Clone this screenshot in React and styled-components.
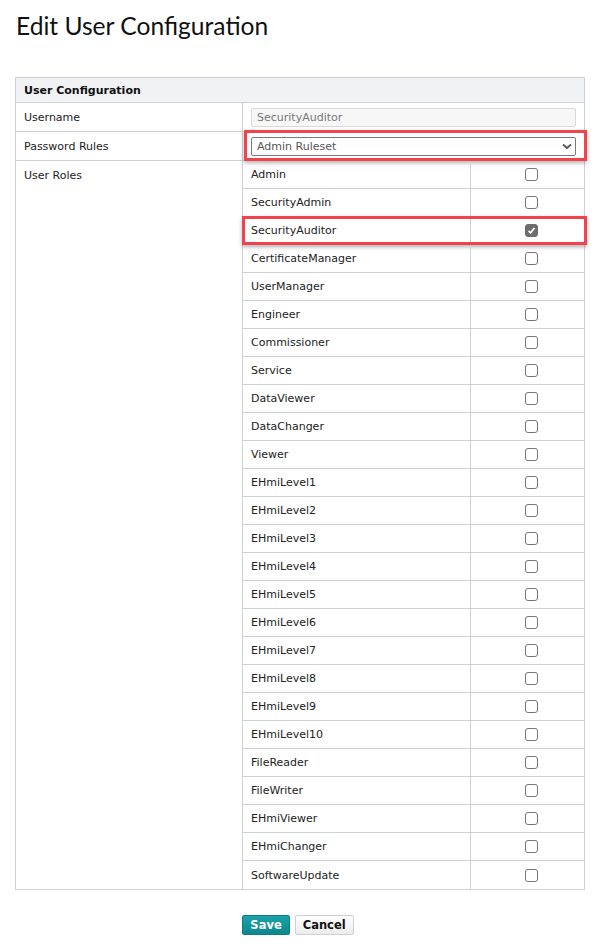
import React from 'react';
import styled, { createGlobalStyle } from 'styled-components';

const roles = [
  'Admin',
  'SecurityAdmin',
  'SecurityAuditor',
  'CertificateManager',
  'UserManager',
  'Engineer',
  'Commissioner',
  'Service',
  'DataViewer',
  'DataChanger',
  'Viewer',
  'EHmiLevel1',
  'EHmiLevel2',
  'EHmiLevel3',
  'EHmiLevel4',
  'EHmiLevel5',
  'EHmiLevel6',
  'EHmiLevel7',
  'EHmiLevel8',
  'EHmiLevel9',
  'EHmiLevel10',
  'FileReader',
  'FileWriter',
  'EHmiViewer',
  'EHmiChanger',
  'SoftwareUpdate',
];

const Checkbox = ({ checked }) => (
  <Box checked={checked}>
    {checked && (
      <svg width="9" height="9" viewBox="0 0 9 9">
        <path d="M1.5 4.8 L3.6 6.8 L7.5 2" fill="none" stroke="#fff" strokeWidth="1.8" />
      </svg>
    )}
  </Box>
);

const App = () => {
  return (
    <Page>
      <GlobalStyle />
      <Title>Edit User Configuration</Title>
      <Table>
        <Header>User Configuration</Header>
        <Label>Username</Label>
        <Cell>
          <TextInput>SecurityAuditor</TextInput>
        </Cell>
        <Label>Password Rules</Label>
        <Cell highlight>
          <Select>
            <span>Admin Ruleset</span>
            <svg width="10" height="7" viewBox="0 0 10 7">
              <path d="M1 1.5 L5 5 L9 1.5" fill="none" stroke="#555" strokeWidth="1.8" />
            </svg>
          </Select>
        </Cell>
        <Label last>User Roles</Label>
        <RoleList>
          {roles.map((role, i) => (
            <RoleRow key={role} highlight={role === 'SecurityAuditor'} last={i === roles.length - 1}>
              <RoleName>{role}</RoleName>
              <RoleCheck>
                <Checkbox checked={role === 'SecurityAuditor'} />
              </RoleCheck>
            </RoleRow>
          ))}
        </RoleList>
      </Table>
      <Actions>
        <SaveButton>Save</SaveButton>
        <CancelButton>Cancel</CancelButton>
      </Actions>
    </Page>
  );
};

export default App;

// Styled components
const GlobalStyle = createGlobalStyle`
  body {
    margin: 0;
    background: #fff;
    font-family: "DejaVu Sans", Verdana, sans-serif;
    color: #222;
  }
`;

const Page = styled.div`
  padding: 11px 15px 16px 15px;
  width: 570px;
`;

const Title = styled.h1`
  margin: 0 0 36px 1px;
  font-family: "Lato", "Open Sans", sans-serif;
  font-weight: 400;
  font-size: 24.6px;
  line-height: 30px;
  color: #111;
`;

const Table = styled.div`
  display: grid;
  grid-template-columns: 227px 1fr;
  border: 1px solid #cdd1d6;
  font-size: 11px;
`;

const Header = styled.div`
  grid-column: 1 / span 2;
  height: 24px;
  display: flex;
  align-items: center;
  padding-left: 8px;
  background: #f0f2f4;
  border-bottom: 1px solid #cdd1d6;
  font-weight: bold;
  color: #111;
`;

const Label = styled.div`
  padding: 8px 8px 0 8px;
  height: ${({ last }) => (last ? 'auto' : '20px')};
  border-right: 1px solid #cdd1d6;
  border-bottom: ${({ last }) => (last ? 'none' : '1px solid #cdd1d6')};
  color: #222;
`;

const Cell = styled.div`
  position: relative;
  height: 28px;
  padding: 0 8px;
  display: flex;
  align-items: center;
  border-bottom: 1px solid #cdd1d6;

  ${({ highlight }) =>
    highlight &&
    `
    &::after {
      content: '';
      position: absolute;
      left: 1px;
      right: -3px;
      top: -2px;
      bottom: -1px;
      border: 3px solid #f0434b;
      box-shadow: 0 2px 4px rgba(0, 0, 0, 0.3);
      pointer-events: none;
    }
  `}
`;

const TextInput = styled.div`
  flex: 1;
  height: 17px;
  display: flex;
  align-items: center;
  padding: 0 5px;
  background: #f7f7f7;
  border: 1px solid #d9d9d9;
  border-radius: 2px;
  color: #777;
`;

const Select = styled.div`
  flex: 1;
  height: 17px;
  display: flex;
  align-items: center;
  justify-content: space-between;
  padding: 0 3px 0 5px;
  background: #fff;
  border: 1px solid #7a7a7a;
  border-radius: 2px;
  color: #555;
`;

const RoleList = styled.div`
  display: flex;
  flex-direction: column;
`;

const RoleRow = styled.div`
  position: relative;
  display: grid;
  grid-template-columns: 228px 1fr;
  height: 28px;
  border-bottom: ${({ last }) => (last ? 'none' : '1px solid #cdd1d6')};
  box-sizing: border-box;

  ${({ highlight }) =>
    highlight &&
    `
    &::after {
      content: '';
      position: absolute;
      left: -1px;
      right: -3px;
      top: -1px;
      bottom: -1px;
      border: 3px solid #f0434b;
      box-shadow: 0 2px 4px rgba(0, 0, 0, 0.3);
      pointer-events: none;
    }
  `}
`;

const RoleName = styled.div`
  display: flex;
  align-items: center;
  padding-left: 8px;
  border-right: 1px solid #cdd1d6;
  color: #222;
`;

const RoleCheck = styled.div`
  display: flex;
  align-items: center;
  justify-content: center;
  padding-left: 7px;
`;

const Box = styled.span`
  width: 13px;
  height: 13px;
  box-sizing: border-box;
  border-radius: 3px;
  display: flex;
  align-items: center;
  justify-content: center;
  border: 1px solid ${({ checked }) => (checked ? '#6d6d6d' : '#767676')};
  background: ${({ checked }) => (checked ? '#6d6d6d' : '#fff')};
`;

const Actions = styled.div`
  display: flex;
  justify-content: center;
  gap: 5px;
  margin-top: 25px;
  padding-right: 4px;
`;

const Button = styled.button`
  height: 20px;
  padding: 0 7px;
  border-radius: 2px;
  font-family: "DejaVu Sans", Verdana, sans-serif;
  font-size: 11.5px;
  font-weight: bold;
  cursor: pointer;
`;

const SaveButton = styled(Button)`
  background: linear-gradient(#1ba2a9, #0b878d);
  border: 1px solid #0b7f85;
  color: #fff;
`;

const CancelButton = styled(Button)`
  background: linear-gradient(#ffffff, #ececec);
  border: 1px solid #cfcfcf;
  color: #111;
`;
